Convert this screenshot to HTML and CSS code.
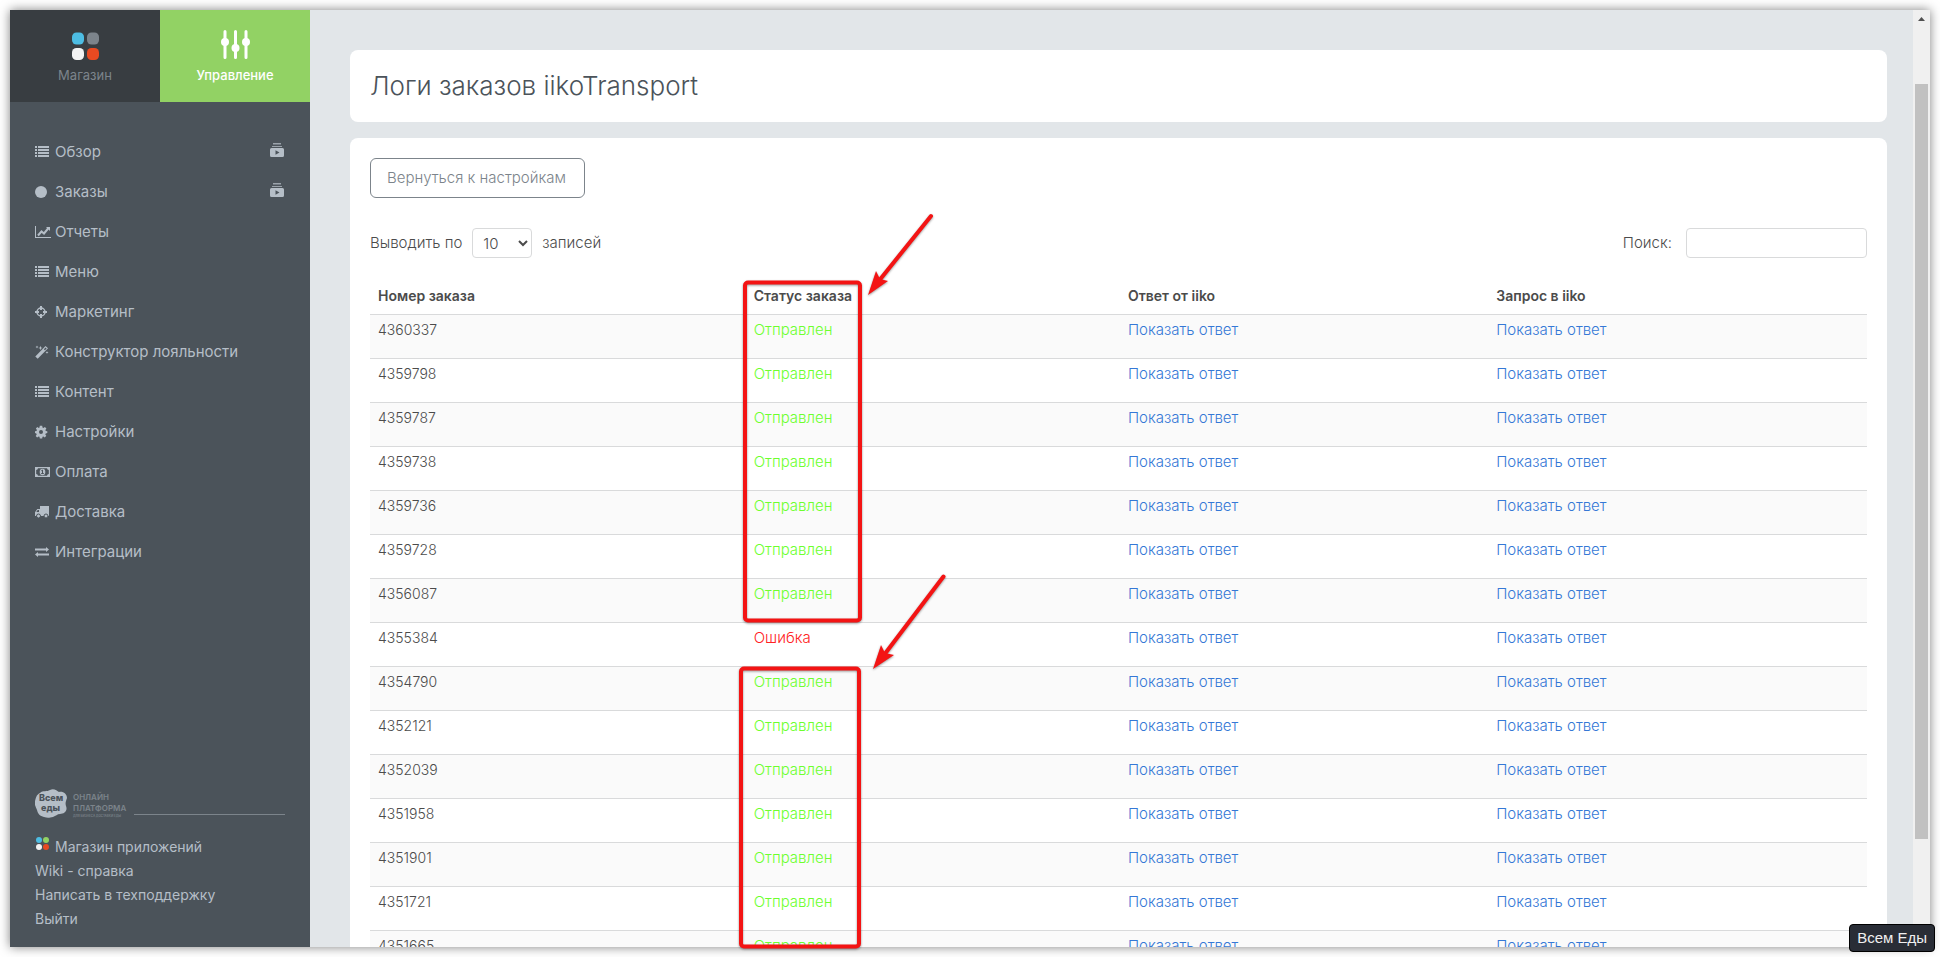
FILE: index.html
```html
<!DOCTYPE html>
<html lang="ru">
<head>
<meta charset="utf-8">
<title>Логи заказов iikoTransport</title>
<link rel="stylesheet" href="styles.css">
</head>
<body>
<svg class="sprite" aria-hidden="true">
  <symbol id="i-list" viewBox="0 0 16 14"><path d="M0 1h2v2H0zM0 4h2v2H0zM0 7h2v2H0zM0 10h2v2H0zM3 1h11v2H3zM3 4h11v2H3zM3 7h11v2H3zM3 10h11v2H3z"/></symbol>
  <symbol id="i-circle" viewBox="0 0 16 14"><circle cx="6" cy="7" r="6"/></symbol>
  <symbol id="i-chart" viewBox="0 0 16 14"><path d="M0 1h1v11h15v1H0z"/><path d="M3 10.500 6.500 6.500 9 8.500 13.500 3" fill="none" stroke="currentColor" stroke-width="2"/><path d="M11 2h4v4z"/></symbol>
  <symbol id="i-target" viewBox="0 0 16 14"><circle cx="6" cy="7" r="4" fill="none" stroke="currentColor" stroke-width="1.500"/><path d="M5 1h2v4H5zM5 9h2v4H5zM0 6h4v2H0zM8 6h4v2H8z"/></symbol>
  <symbol id="i-magic" viewBox="0 0 16 14"><path d="M.3 11.500 10.500 1 13 3.300 2.700 13.800zM8.900 4.300l1 1 1.700-1.700-1-1z" fill-rule="evenodd"/><path d="M2 .5l.4 1.100 1.100.4-1.100.4L2 3.500l-.4-1.100L.5 2l1.100-.4zM5.500.8l.6 1.600 1.600.6-1.600.6-.6 1.600-.6-1.600L3.300 3l1.600-.6zM12 6l.4 1.100 1.100.4-1.100.4L12 9l-.4-1.100-1.100-.4 1.100-.4z"/></symbol>
  <symbol id="i-cog" viewBox="0 0 16 14"><path fill-rule="evenodd" d="M4.800.8h2.400l.3 1.700.9.400 1.500-1 1.500 1.600-1 1.400.4 1 1.500.3v1.900l-1.600.3-.4 1 1 1.400-1.500 1.600-1.400-1-.9.400-.3 1.600H4.800l-.3-1.600-.9-.4-1.500 1-1.400-1.500 1-1.500-.4-1L0 8.100V6.200l1.500-.3.4-1-1-1.400 1.400-1.600 1.500 1 .7-.4zM6 5a2 2 0 1 0 0 4 2 2 0 0 0 0-4z"/></symbol>
  <symbol id="i-money" viewBox="0 0 16 14"><path fill-rule="evenodd" d="M0 2h15v10H0zM3 3.200A2 2 0 0 1 1.200 5v4A2 2 0 0 1 3 10.800h9A2 2 0 0 1 13.800 9V5A2 2 0 0 1 12 3.200z"/><ellipse cx="7.500" cy="7" rx="2.800" ry="3.200"/><path class="hole" d="M6.200 8.900h2.600v-.9h-.8V4.800h-.9l-1 .9.500.6.400-.2v1.900h-.8z"/></symbol>
  <symbol id="i-truck" viewBox="0 0 16 14"><path fill-rule="evenodd" d="M5 1h9v10H0V7.200L2.300 4H5zM1.300 7H4V5H2.700z"/><g class="wheel"><circle cx="3.500" cy="11" r="2"/><circle cx="11" cy="11" r="2"/></g></symbol>
  <symbol id="i-exchange" viewBox="0 0 16 14"><path d="M0 3.500h11V2l3 2.500L11 7V5.500H0zM14 8.500H3V7L0 9.500 3 12v-1.500h11z"/></symbol>
  <symbol id="i-video" viewBox="0 0 14 14"><path d="M3 0h8v1.500H3zM2 3h10v1H2z" opacity=".75"/><path fill-rule="evenodd" d="M1.500 5h11A1.500 1.500 0 0 1 14 6.500v6a1.500 1.500 0 0 1-1.500 1.500h-11A1.500 1.500 0 0 1 0 12.500v-6A1.500 1.500 0 0 1 1.500 5zM5.500 7.300v4.400l4-2.200z"/></symbol>
</svg>

<div class="window">
  <aside class="sidebar">
    <div class="tabs">
      <a class="tab" href="#">
        <svg class="tab-icon" viewBox="0 0 30 30"><rect x="2" y="2.500" width="12" height="12" rx="4.500" fill="#4dbde3"/><rect x="17" y="2.500" width="12" height="12" rx="4.500" fill="#7c848b"/><rect x="2" y="18" width="12" height="12" rx="4.500" fill="#f3f3f3"/><rect x="17" y="18" width="12" height="12" rx="4.500" fill="#e94a21"/></svg>
        <span>Магазин</span>
      </a>
      <a class="tab active" href="#">
        <svg class="tab-icon" viewBox="0 0 30 30"><g stroke="#fff" stroke-width="3" stroke-linecap="round"><path d="M5 1.500v26M15.500 1.500v26M26 1.500v26"/></g><g fill="#fff"><circle cx="5" cy="12" r="4"/><circle cx="15.500" cy="18" r="4"/><circle cx="26" cy="12" r="4"/></g></svg>
        <span>Управление</span>
      </a>
    </div>
    <nav class="menu">
      <a href="#"><svg><use href="#i-list"/></svg>Обзор<svg class="video"><use href="#i-video"/></svg></a>
      <a href="#"><svg><use href="#i-circle"/></svg>Заказы<svg class="video"><use href="#i-video"/></svg></a>
      <a href="#"><svg><use href="#i-chart"/></svg>Отчеты</a>
      <a href="#"><svg><use href="#i-list"/></svg>Меню</a>
      <a href="#"><svg><use href="#i-target"/></svg>Маркетинг</a>
      <a href="#"><svg><use href="#i-magic"/></svg>Конструктор лояльности</a>
      <a href="#"><svg><use href="#i-list"/></svg>Контент</a>
      <a href="#"><svg><use href="#i-cog"/></svg>Настройки</a>
      <a href="#"><svg><use href="#i-money"/></svg>Оплата</a>
      <a href="#"><svg><use href="#i-truck"/></svg>Доставка</a>
      <a href="#"><svg><use href="#i-exchange"/></svg>Интеграции</a>
    </nav>
    <div class="brand">
      <svg class="logo" viewBox="0 0 92 30">
        <path fill="#b5bec7" d="M5 4C8 1 12 3 15 1c4-2 7 1 9 2 4-1 8 2 8 6-1 3-2 5-1 8 2 5-2 8-6 8-3 0-4 2-7 3-4 1-6 1-9 0-4-1-6-3-7-7C1 18-1 16 0 12 1 9 1 6 5 4z"/>
        <g class="logo-name"><text x="4" y="12">Всем</text><text x="6" y="22">еды</text></g>
        <g class="logo-tag"><text x="38" y="11">ОНЛАЙН</text><text x="38" y="22">ПЛАТФОРМА</text></g>
        <text class="logo-small" x="38" y="28">ДЛЯ БИЗНЕСА ДОСТАВКИ ЕДЫ</text>
      </svg>
      <span class="brand-line"></span>
    </div>
    <nav class="links">
      <a href="#"><svg viewBox="0 0 16 16"><circle cx="4" cy="5" r="3" fill="#4dbde3"/><circle cx="11" cy="5" r="3" fill="#92d264"/><circle cx="4" cy="12" r="3" fill="#f3f3f3"/><circle cx="11" cy="12" r="3" fill="#e94a21"/></svg>Магазин приложений</a>
      <a href="#">Wiki - справка</a>
      <a href="#">Написать в техподдержку</a>
      <a href="#">Выйти</a>
    </nav>
  </aside>

  <main class="content">
    <header class="card title-card"><h1>Логи заказов iikoTransport</h1></header>
    <section class="card">
      <button class="back" type="button">Вернуться к настройкам</button>
      <div class="controls">
        <div class="length">
          <label for="length">Выводить по</label>
          <select id="length"><option>10</option><option>25</option></select>
          <span>записей</span>
        </div>
        <div class="search">
          <label for="search">Поиск:</label>
          <input id="search" type="search">
        </div>
      </div>
      <table class="logs">
        <colgroup><col class="col-number"><col class="col-status"><col class="col-answer"><col></colgroup>
        <thead><tr><th>Номер заказа</th><th>Статус заказа</th><th>Ответ от iiko</th><th>Запрос в iiko</th></tr></thead>
        <tbody>
          <tr><td class="number">4360337</td><td class="ok">Отправлен</td><td><a href="#">Показать ответ</a></td><td><a href="#">Показать ответ</a></td></tr>
          <tr><td class="number">4359798</td><td class="ok">Отправлен</td><td><a href="#">Показать ответ</a></td><td><a href="#">Показать ответ</a></td></tr>
          <tr><td class="number">4359787</td><td class="ok">Отправлен</td><td><a href="#">Показать ответ</a></td><td><a href="#">Показать ответ</a></td></tr>
          <tr><td class="number">4359738</td><td class="ok">Отправлен</td><td><a href="#">Показать ответ</a></td><td><a href="#">Показать ответ</a></td></tr>
          <tr><td class="number">4359736</td><td class="ok">Отправлен</td><td><a href="#">Показать ответ</a></td><td><a href="#">Показать ответ</a></td></tr>
          <tr><td class="number">4359728</td><td class="ok">Отправлен</td><td><a href="#">Показать ответ</a></td><td><a href="#">Показать ответ</a></td></tr>
          <tr><td class="number">4356087</td><td class="ok">Отправлен</td><td><a href="#">Показать ответ</a></td><td><a href="#">Показать ответ</a></td></tr>
          <tr><td class="number">4355384</td><td class="error">Ошибка</td><td><a href="#">Показать ответ</a></td><td><a href="#">Показать ответ</a></td></tr>
          <tr><td class="number">4354790</td><td class="ok">Отправлен</td><td><a href="#">Показать ответ</a></td><td><a href="#">Показать ответ</a></td></tr>
          <tr><td class="number">4352121</td><td class="ok">Отправлен</td><td><a href="#">Показать ответ</a></td><td><a href="#">Показать ответ</a></td></tr>
          <tr><td class="number">4352039</td><td class="ok">Отправлен</td><td><a href="#">Показать ответ</a></td><td><a href="#">Показать ответ</a></td></tr>
          <tr><td class="number">4351958</td><td class="ok">Отправлен</td><td><a href="#">Показать ответ</a></td><td><a href="#">Показать ответ</a></td></tr>
          <tr><td class="number">4351901</td><td class="ok">Отправлен</td><td><a href="#">Показать ответ</a></td><td><a href="#">Показать ответ</a></td></tr>
          <tr><td class="number">4351721</td><td class="ok">Отправлен</td><td><a href="#">Показать ответ</a></td><td><a href="#">Показать ответ</a></td></tr>
          <tr><td class="number">4351665</td><td class="ok">Отправлен</td><td><a href="#">Показать ответ</a></td><td><a href="#">Показать ответ</a></td></tr>
        </tbody>
      </table>
    </section>
  </main>

  <div class="scrollbar" aria-hidden="true">
    <svg viewBox="0 0 17 17"><path d="M5 11h7L8.500 7z" fill="#505050"/></svg>
    <div class="thumb"></div>
  </div>
</div>

<svg class="marks" aria-hidden="true">
  <g fill="none" stroke="#f31414" stroke-width="4">
    <rect x="745" y="282.500" width="115" height="338" rx="3"/>
    <rect x="741" y="668.500" width="118" height="278" rx="3"/>
    <path d="M931 216 878 282M943.500 576.500 884 655" stroke-linecap="round"/>
  </g>
  <path d="M868 295 876 271 880 279 888 281zM873 669 881 645 885 653 894 655z" fill="#f31414"/>
</svg>
<div class="tooltip" role="tooltip">Всем Еды</div>
</body>
</html>
```
FILE: styles.css
```css
* { box-sizing: border-box; }

body {
  margin: 0;
  height: 100vh;
  padding: 10px;
  overflow: hidden;
  position: relative;
  background: #fff;
  color: #4b4b4b;
  font: 300 15px/20px Inter, "Open Sans", sans-serif;
}

a { color: inherit; text-decoration: none; }
.sprite { display: none; }

.window {
  display: flex;
  height: 100%;
  background: #e2e6e9;
  box-shadow: 0 0 10px rgba(0, 0, 0, 0.5);
}

/* Sidebar */
.sidebar {
  flex: 0 0 300px;
  display: flex;
  flex-direction: column;
  background: #4b535a;
  color: #b5bec7;
  font-weight: 400;
}

.tabs { display: flex; }
.tab {
  flex: 1;
  display: flex;
  flex-direction: column;
  align-items: center;
  gap: 6px;
  height: 92px;
  padding-top: 20px;
  background: #383d41;
  color: #7c848b;
  font-size: 13px;
  line-height: 18px;
}
.tab.active { background: #92d264; color: #fff; font-weight: 500; }
.tab-icon { width: 30px; height: 30px; }

.menu { flex: 1; padding: 30px 25px 0; }
.menu a { display: flex; align-items: center; gap: 4px; height: 40px; }
.menu svg { width: 16px; height: 14px; fill: currentColor; }
.menu .video { width: 14px; margin: 0 1px 4px auto; }
.wheel { stroke: #4b535a; }
.hole { fill: #4b535a; }

.brand { display: flex; align-items: flex-end; gap: 7px; padding: 0 25px; }
.logo { flex: none; width: 92px; height: 30px; }
.logo-name { font: 800 9px Inter, sans-serif; fill: #4b535a; }
.logo-tag { font: 600 8px Inter, sans-serif; fill: #7c848b; }
.logo-small { font: 600 3px Inter, sans-serif; fill: #7c848b; }
.brand-line { flex: 1; height: 1px; margin-bottom: 4px; background: #7c848b; }

.links { padding: 16px 25px; font-size: 14px; line-height: 24px; }
.links a { display: flex; gap: 4px; }
.links svg { width: 16px; height: 16px; }

/* Content */
.content {
  flex: 1;
  display: flex;
  flex-direction: column;
  gap: 16px;
  min-width: 0;
  padding: 40px 26px 0 40px;
  overflow: hidden;
}
.card { flex: none; padding: 20px; border-radius: 8px; background: #fff; }
h1 { margin: 0; color: #4b535a; font-size: 26px; font-weight: 300; line-height: 32px; }

.back {
  height: 40px;
  padding: 0 18px 0 16px;
  border: 1px solid #7c848b;
  border-radius: 6px;
  background: #fff;
  color: #7c848b;
  font: inherit;
}

.controls { display: flex; justify-content: space-between; margin: 30px 0 20px; }
.length, .search { display: flex; align-items: center; gap: 10px; }
.search { gap: 14px; }
select, input {
  height: 30px;
  border: 1px solid #d9dadb;
  border-radius: 4px;
  background: #fff;
  color: #4b4b4b;
  font: inherit;
}
select { width: 60px; padding-left: 6px; }
input { width: 181px; }

.logs { width: 100%; border-collapse: collapse; table-layout: fixed; }
.col-number { width: 25.1%; }
.col-status { width: 25%; }
.col-answer { width: 24.6%; }
.logs th { height: 36px; padding: 0 8px; text-align: left; font-weight: 600; font-size: 14px; }
.logs td { height: 44px; padding: 5px 8px; vertical-align: top; border-top: 1px solid #d9dadb; }
.logs .number { font-size: 14px; }
.logs tbody tr:nth-child(odd) { background: #fafafa; }
.logs a { color: #3578d6; }
.logs .ok { color: #6dff2e; }
.logs .error { color: #f22; }

.scrollbar { flex: 0 0 17px; display: flex; flex-direction: column; background: #f0f0f0; }
.scrollbar svg { flex: none; width: 17px; height: 17px; }
.thumb { flex: 1; margin: 57px 2px 108px; background: #c1c1c1; }

/* Overlays */
.marks { position: absolute; inset: 0; width: 100%; height: 100%; filter: drop-shadow(0 1px 1px rgba(0, 0, 0, 0.4)); }
.tooltip {
  position: absolute;
  right: 5px;
  bottom: 5px;
  padding: 3px 7px;
  border: 1px solid #000;
  border-radius: 4px;
  background: #292d36;
  color: #f0f0f0;
  font: 400 15px/20px "Liberation Sans", sans-serif;
}
```
